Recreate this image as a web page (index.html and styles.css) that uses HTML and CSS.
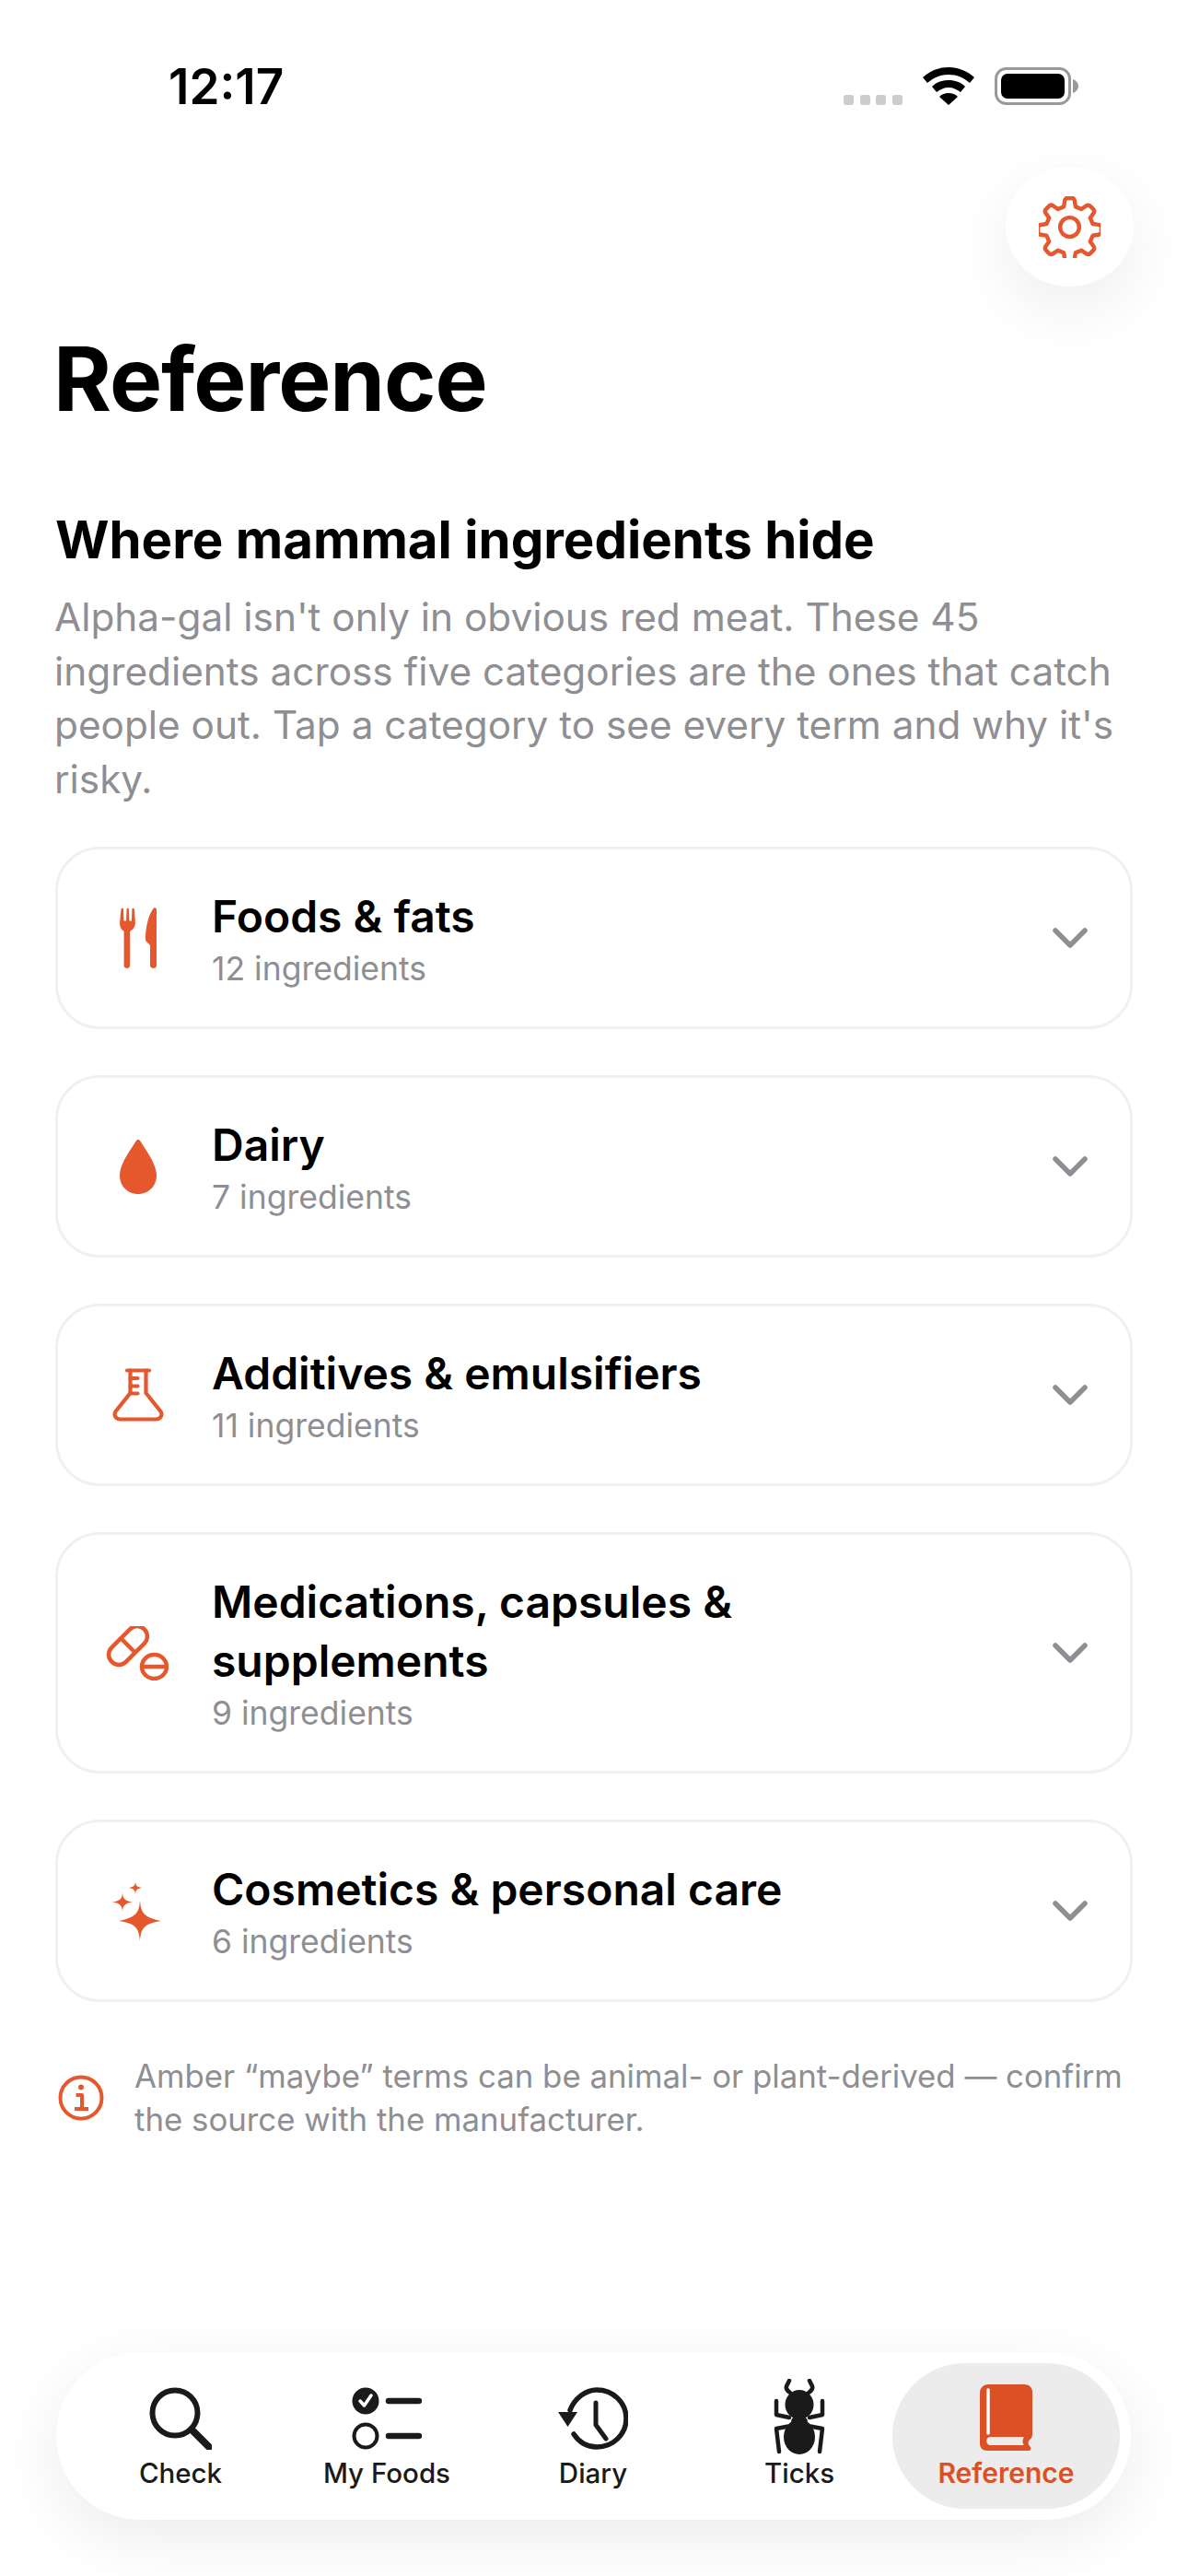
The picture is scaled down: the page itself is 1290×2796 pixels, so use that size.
FILE: index.html
```html
<!DOCTYPE html>
<html lang="en">
<head>
<meta charset="utf-8">
<title>Reference</title>
<link rel="stylesheet" href="styles.css">
</head>
<body>
<div class="screen">
  <header class="status">
    <span class="time">12:17</span>
    <div class="status-icons">
      <div class="signal"><i></i><i></i><i></i><i></i></div>
      <svg class="wifi" viewBox="0 0 56 41"><path d="M28 0C17 0 8 4 0 11l5 6c7-6 14-9 23-9s16 3 23 9l5-6C48 4 39 0 28 0z"/><path d="M28 14c-7 0-13 2-18 7l5 6c4-3 8-5 13-5s9 2 13 5l5-6c-5-5-11-7-18-7z"/><path d="M28 28c-4 0-7 1-10 4l10 9 10-9c-3-3-6-4-10-4z"/></svg>
      <svg class="battery" viewBox="0 0 91 41"><rect x="1.5" y="1.5" width="80" height="38" rx="11" fill="none" stroke="#999" stroke-width="3"/><rect x="7" y="7" width="69" height="27" rx="7"/><path d="M85 13c3 1 6 4 6 7.500s-3 6.500-6 7.500z" fill="#999"/></svg>
    </div>
  </header>

  <button class="settings" aria-label="Settings">
    <svg viewBox="0 0 68 68" fill="none" stroke="#e5582e" stroke-width="4.500" stroke-linejoin="round"><path d="M28.500 5.500c.3-2 1.500-3.500 3-3.500h5c1.500 0 2.700 1.500 3 3.500l1 6 6.500 2.700 5-3.500c1.600-1.100 3.500-1 4.600.1l3.500 3.500c1.100 1.100 1.200 3 .1 4.600l-3.500 5 2.700 6.500 6 1c2 .3 3.500 1.500 3.500 3v5c0 1.500-1.500 2.700-3.500 3l-6 1-2.700 6.500 3.500 5c1.100 1.600 1 3.500-.1 4.600l-3.500 3.500c-1.100 1.100-3 1.200-4.600.1l-5-3.500-6.500 2.700-1 6c-.3 2-1.500 3.500-3 3.500h-5c-1.500 0-2.700-1.500-3-3.500l-1-6-6.500-2.700-5 3.500c-1.600 1.100-3.500 1-4.600-.1l-3.500-3.500c-1.100-1.100-1.200-3-.1-4.600l3.500-5-2.700-6.500-6-1c-2-.3-3.500-1.500-3.500-3v-5c0-1.500 1.500-2.700 3.500-3l6-1 2.700-6.500-3.500-5c-1.100-1.600-1-3.500.1-4.600l3.500-3.500c1.100-1.100 3-1.200 4.600-.1l5 3.500 6.500-2.700z"/><circle cx="34" cy="34" r="10.500"/></svg>
  </button>

  <main class="content">
    <h1 class="title">Reference</h1>
    <h2 class="heading">Where mammal ingredients hide</h2>
    <p class="intro">Alpha-gal isn't only in obvious red meat. These 45 ingredients across five categories are the ones that catch people out. Tap a category to see every term and why it's risky.</p>

    <section class="cards">
      <article class="card">
        <div class="card-icon"><svg class="ic-food" viewBox="0 0 40 66" fill="#e5582e"><path d="M1.500 1.500c.8-1 2-1 2.500 0l.5 13h2.500l.6-13c.3-1 2-1 2.300 0l.6 13h2.400l.5-13c.5-1 1.800-1 2.500 0l1 15c0 5-3 8-5.800 9.500V63c0 4-6.500 4-6.500 0V26C2.500 24.500 0 21.500 0 17z"/><path d="M37 .5c1.500-.7 3 .3 3 2V63c0 4-7 4-7 0V41l-4-4c-.7-.8-1-1.500-1-3 0-14 4-28 9-33.500z"/></svg></div>
        <div class="card-text"><h3 class="card-title">Foods &amp; fats</h3><p class="card-sub">12 ingredients</p></div>
        <svg class="chevron" viewBox="0 0 38 22"><path d="M3 3l16 16L35 3"/></svg>
      </article>
      <article class="card">
        <div class="card-icon"><svg class="ic-drop" viewBox="0 0 40 59" fill="#e5582e"><path d="M20 0c1 0 1.800.6 2.500 1.800C28 11 40 26 40 39c0 11.500-9 20-20 20S0 50.500 0 39C0 26 12 11 17.500 1.800 18.200.6 19 0 20 0z"/></svg></div>
        <div class="card-text"><h3 class="card-title">Dairy</h3><p class="card-sub">7 ingredients</p></div>
        <svg class="chevron" viewBox="0 0 38 22"><path d="M3 3l16 16L35 3"/></svg>
      </article>
      <article class="card">
        <div class="card-icon"><svg class="ic-flask" viewBox="0 0 56 58" fill="none" stroke="#e5582e" stroke-width="4.200" stroke-linecap="round" stroke-linejoin="round"><path d="M16 2.500h24"/><path d="M19.500 2.500V27L3.500 47c-2.500 4 .5 8.500 5 8.500h39c4.500 0 7.500-4.500 5-8.500L36.500 27V2.500"/><path d="M19.500 11h8M19.500 19.500h8M19.500 27.500h8"/></svg></div>
        <div class="card-text"><h3 class="card-title">Additives &amp; emulsifiers</h3><p class="card-sub">11 ingredients</p></div>
        <svg class="chevron" viewBox="0 0 38 22"><path d="M3 3l16 16L35 3"/></svg>
      </article>
      <article class="card">
        <div class="card-icon"><svg class="ic-pills" viewBox="0 0 68 59" fill="none" stroke="#e5582e" stroke-width="4.500"><g transform="rotate(-45 24 21)"><rect x="-1" y="10" width="50" height="22" rx="11"/><path d="M24 10v22"/></g><ellipse cx="52.500" cy="44" rx="13.500" ry="13"/><path d="M39 44h27"/></svg></div>
        <div class="card-text"><h3 class="card-title">Medications, capsules &amp; supplements</h3><p class="card-sub">9 ingredients</p></div>
        <svg class="chevron" viewBox="0 0 38 22"><path d="M3 3l16 16L35 3"/></svg>
      </article>
      <article class="card">
        <div class="card-icon"><svg class="ic-spark" viewBox="0 0 53 65" fill="#e5582e"><path d="M30 21c1 13 4 18 23 22-19 3-22 8-23 22-1-14-4-19-23-22 19-4 22-9 23-22z"/><path d="M11 12c.5 7 2 9 11 10.500-9 1.500-10.500 4-11 10.500-.5-6.500-2-9-11-10.500C9 21 10.500 19 11 12z"/><path d="M25 0c.4 4 1 6 7 7-6 1-6.600 3-7 7-.4-4-1-6-7-7 6-1 6.600-3 7-7z"/></svg></div>
        <div class="card-text"><h3 class="card-title">Cosmetics &amp; personal care</h3><p class="card-sub">6 ingredients</p></div>
        <svg class="chevron" viewBox="0 0 38 22"><path d="M3 3l16 16L35 3"/></svg>
      </article>
    </section>

    <div class="note">
      <svg class="ic-info" viewBox="0 0 50 50" fill="none" stroke="#e5582e" stroke-width="4"><circle cx="25" cy="25" r="22.500"/><path d="M19.500 22H26v15M18 37h15" stroke-linejoin="round"/><circle cx="25" cy="13.500" r="3" fill="#e5582e" stroke="none"/></svg>
      <p class="note-text">Amber “maybe” terms can be animal- or plant-derived — confirm the source with the manufacturer.</p>
    </div>
  </main>

  <nav class="tabbar">
    <a class="tab">
      <div class="tab-slot"><svg class="ic-check" viewBox="0 0 68 68" fill="none" stroke="#1a1a1a" stroke-width="6" stroke-linecap="round"><circle cx="28" cy="28" r="24.500"/><path d="M46 46l19 19" stroke-width="8"/></svg></div>
      <span>Check</span>
    </a>
    <a class="tab">
      <div class="tab-slot"><svg class="ic-list" viewBox="0 0 76 68"><circle cx="15" cy="15" r="14.500" fill="#1a1a1a"/><path d="M9 15l4.500 5L21 9" fill="none" stroke="#fff" stroke-width="3.500" stroke-linecap="round" stroke-linejoin="round"/><circle cx="15" cy="53" r="12.500" fill="none" stroke="#1a1a1a" stroke-width="4"/><path d="M40 15h33M40 53h33" stroke="#1a1a1a" stroke-width="6.500" stroke-linecap="round"/></svg></div>
      <span>My Foods</span>
    </a>
    <a class="tab">
      <div class="tab-slot"><svg class="ic-list" viewBox="0 0 76 68"><path d="M13 25C18 12 30 3 42 3c18 0 32 14 32 31S60 65 42 65c-11 0-19-5-25-14" fill="none" stroke="#1a1a1a" stroke-width="5.500" stroke-linecap="round"/><path d="M0 27h21L10.500 43z" fill="#1a1a1a"/><path d="M41 17v24l11 15" fill="none" stroke="#1a1a1a" stroke-width="5" stroke-linecap="round" stroke-linejoin="round"/></svg></div>
      <span>Diary</span>
    </a>
    <a class="tab">
      <div class="tab-slot"><svg class="ic-ant" viewBox="0 0 56 82"><g fill="none" stroke="#1a1a1a" stroke-width="4.500" stroke-linecap="round" stroke-linejoin="round"><path d="M17 2l-3 6c-1 3 1 5 4 7M39 2l3 6c1 3-1 5-4 7"/><path d="M3 24v15l14 3M53 24v15l-14 3"/><path d="M19 51L3 54l3 25M37 51l16 3-3 25"/></g><ellipse cx="28" cy="28" rx="15.500" ry="16" fill="#1a1a1a"/><ellipse cx="28" cy="46" rx="9" ry="6" fill="#1a1a1a"/><ellipse cx="28" cy="63" rx="17" ry="19" fill="#1a1a1a"/></svg></div>
      <span>Ticks</span>
    </a>
    <a class="tab tab-active">
      <div class="tab-slot"><svg class="ic-book" viewBox="0 0 57 72"><path d="M9 0h39c5 0 9 3 9 8v46c0 3-1 5-3 6-2 2-2 5 0 7 2 1 2 5-1 5H8c-5 0-8-3-8-8V9c0-5 4-9 9-9z" fill="#dc5026"/><path d="M9 6v47" stroke="#fff" stroke-width="3.500" stroke-linecap="round"/><path d="M11 57h37c-2 3-2 7 0 9H11c-5 0-5-9 0-9z" fill="#ececec"/></svg></div>
      <span>Reference</span>
    </a>
  </nav>
</div>
</body>
</html>
```

FILE: styles.css
```css
* { box-sizing: border-box; margin: 0; padding: 0; }
html, body { width: 1290px; height: 2796px; background: #fff; }
body { font-family: Inter, "Noto Sans", "Liberation Sans", sans-serif; color: #000; overflow: hidden; }

.screen { position: relative; width: 1290px; height: 2796px; background: #fff; overflow: hidden; }

.status { display: flex; justify-content: space-between; align-items: flex-start; height: 353px; padding: 63px 119px 0 183px; }
.time { font-size: 53px; font-weight: 600; line-height: 62px; }
.status-icons { display: flex; align-items: flex-end; padding-top: 10px; gap: 22px; }
.signal { display: flex; gap: 6.6px; }
.signal i { width: 11px; height: 11px; border-radius: 3px; background: #ccc; }
.wifi { width: 56px; height: 41px; }
.battery { width: 91px; height: 41px; }

.settings { position: absolute; left: 1092px; top: 181px; width: 139px; height: 130px; border: 0; border-radius: 50%; background: #fff; box-shadow: 0 24px 70px rgba(0,0,0,.07); display: flex; align-items: center; justify-content: center; }
.settings svg { width: 67px; height: 67px; }

.content { padding: 0 60px; }
.title { font-size: 96px; font-weight: 700; line-height: 116px; letter-spacing: -1px; margin-left: -2px; }
.heading { font-size: 56.400px; font-weight: 700; line-height: 68px; margin-top: 83px; }
.intro { font-size: 42.300px; line-height: 58.500px; color: #8e8e93; margin-top: 21px; margin-left: -1px; }

.cards { display: flex; flex-direction: column; gap: 50px; margin-top: 44px; }
.card { display: flex; align-items: center; border: 3px solid #f0f0f0; border-radius: 48px; padding: 0 46px 0 0; }
.card-icon { width: 167px; flex: none; display: flex; justify-content: center; padding-left: 7px; }
.card-text { flex: 1; padding: 41px 120px 41px 0; }
.card-title { font-size: 48px; font-weight: 600; line-height: 64px; }
.card-sub { font-size: 35.500px; line-height: 43px; color: #8e8e93; margin-top: 3px; }
.chevron { width: 38px; height: 22px; flex: none; fill: none; stroke: #8e8e93; stroke-width: 5.500; stroke-linecap: round; stroke-linejoin: round; }

.ic-food { width: 40px; height: 66px; }
.ic-drop { width: 40px; height: 59px; }
.ic-flask { width: 56px; height: 58px; }
.ic-pills { width: 68px; height: 59px; margin-left: -3px; }
.ic-spark { width: 53px; height: 65px; margin-left: -3px; }

.note { display: flex; align-items: center; gap: 33px; margin-top: 57px; padding-left: 3px; }
.ic-info { width: 50px; height: 50px; flex: none; }
.note-text { font-size: 34.800px; line-height: 47px; color: #8e8e93; }

.tabbar { position: absolute; left: 61px; top: 2553px; width: 1167px; height: 182px; background: #fff; border-radius: 91px; box-shadow: 0 20px 70px rgba(0,0,0,.08); display: grid; grid-template-columns: 224px 224px 224px 224px 236px; padding: 12px 12px 12px 23px; }
.tab { display: flex; flex-direction: column; align-items: center; color: #1a1a1a; font-size: 29.500px; font-weight: 500; line-height: 38px; border-radius: 80px; }
.tab-slot { height: 100px; padding-top: 26px; display: flex; justify-content: center; }
.ic-check { width: 68px; height: 68px; }
.ic-list { width: 76px; height: 68px; }
.ic-ant { width: 56px; height: 82px; margin-top: -9px; }
.ic-book { width: 57px; height: 72px; margin-top: -3px; }
.tab-active { margin-left: -11px; background: #ececec; color: #dc5026; font-size: 30px; font-weight: 600; }
```
